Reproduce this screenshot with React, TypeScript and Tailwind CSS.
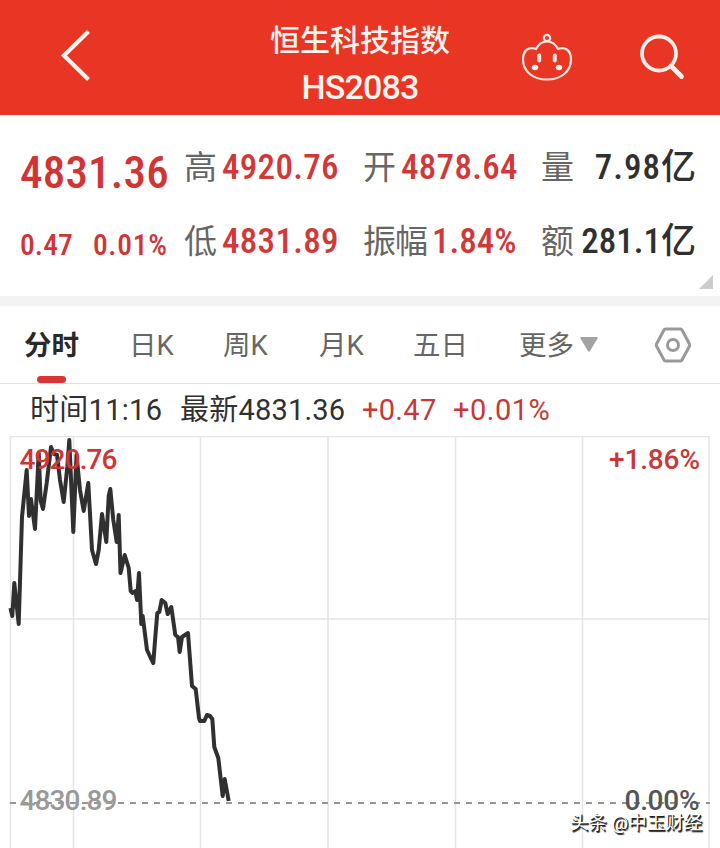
import clsx from "clsx";

type Stat = { label: string; value: string; red?: boolean };

const columns: { className: string; stats: Stat[] }[] = [
  {
    className: "w-[179px]",
    stats: [
      { label: "高", value: "4920.76", red: true },
      { label: "低", value: "4831.89", red: true },
    ],
  },
  {
    className: "w-[178px]",
    stats: [
      { label: "开", value: "4878.64", red: true },
      { label: "振幅", value: "1.84%", red: true },
    ],
  },
  {
    className: "w-[155px]",
    stats: [
      { label: "量", value: "7.98" },
      { label: "额", value: "281.1" },
    ],
  },
];

const tabs = [
  { label: "日K", className: "w-[94px]" },
  { label: "周K", className: "w-[96px]" },
  { label: "月K", className: "w-[94px]" },
  { label: "五日", className: "w-[106px]" },
];

const prices = [
  [10.5, 608], [12.3, 616], [14.3, 583], [18.7, 624], [22, 517], [26.7, 470], [29, 516], [31, 499],
  [35, 529], [38.7, 453], [40.7, 501], [43, 509], [46.7, 483], [51, 447], [54, 454], [57, 455],
  [60, 480], [63.7, 502], [67.3, 467], [69.3, 440], [73.3, 532], [76.5, 455], [80, 490], [83.7, 511],
  [88.3, 483], [92, 550], [96, 564], [98.7, 550], [102, 514], [106.3, 542], [108.7, 496], [110.3, 489],
  [113.3, 520], [116.7, 542], [118.7, 515], [120.5, 573], [124.7, 555], [128.7, 568], [130.7, 591],
  [132.7, 593], [135.3, 591], [137, 600], [139, 573], [141.3, 624], [142.7, 616], [147, 650],
  [150.3, 657], [153.3, 663], [155.3, 637], [157.3, 613], [159.3, 612], [161.7, 600], [165.3, 603],
  [167.7, 614], [171.3, 607], [175.3, 635], [178, 637], [179.7, 652], [182, 637], [188, 633],
  [192, 686], [195.7, 689], [199, 718], [200, 721], [204.3, 721], [207, 715], [210, 716], [212.3, 719],
  [214.3, 747], [218.3, 758], [222.7, 796], [224.7, 779], [228.7, 801],
];

function BackIcon() {
  return (
    <svg width="32" height="52" viewBox="0 0 32 52" fill="none" stroke="#fff3ee" strokeWidth="4.2">
      <path d="M28.5 2.5 4 26.5 28.5 50.5" />
    </svg>
  );
}

function RobotIcon() {
  return (
    <svg width="52" height="50" viewBox="0 0 52 50" fill="none" stroke="#ffe9e2" strokeWidth="2.2">
      <circle cx="26" cy="6" r="3.2" />
      <path d="M26 9.5c5 0 8.5 2.5 11 7.5 7-2.5 13 1 13 10.5C50 39.5 40 47.5 26 47.5S2 39.5 2 27.5C2 18 8 14.5 15 17 17.5 12 21 9.5 26 9.5Z" />
      <path d="M18.2 23.5v5M33.8 23.5v5" strokeWidth="4" strokeLinecap="round" />
      <g fill="#fff3ee" stroke="none">
        <ellipse cx="14" cy="35.5" rx="3.2" ry="2.7" />
        <ellipse cx="38" cy="35.5" rx="3.2" ry="2.7" />
      </g>
    </svg>
  );
}

function SearchIcon() {
  return (
    <svg width="46" height="46" viewBox="0 0 46 46" fill="none" stroke="#ffeee8">
      <circle cx="20" cy="19.5" r="17" strokeWidth="3.8" />
      <path d="M32 32 42.5 42.5" strokeWidth="4.8" strokeLinecap="round" />
    </svg>
  );
}

function SettingsIcon() {
  return (
    <svg width="38" height="36" viewBox="0 0 38 36" fill="none" stroke="#999" strokeWidth="3" strokeLinejoin="round">
      <path d="M11.5 2h15q1 0 1.5 1l7.5 14q.5 1 0 2l-7.5 14q-.5 1-1.5 1h-15q-1 0-1.5-1L2.5 19q-.5-1 0-2L10 3q.5-1 1.5-1Z" />
      <circle cx="19" cy="18" r="5.5" />
    </svg>
  );
}

function Header() {
  return (
    <header className="flex h-[115px] items-start bg-[#e93524] text-[#fff3ee]">
      <div className="w-[239px] pt-[29px] pl-[60px]">
        <BackIcon />
      </div>
      <div className="flex w-[242px] flex-col items-center pt-[21px] font-medium">
        <h1 className="text-[30px] leading-10">恒生科技指数</h1>
        <p className="pt-1.5 text-[34px] leading-10 tracking-[-0.8px]">HS2083</p>
      </div>
      <div className="w-[158px] pt-[32px] pl-10">
        <RobotIcon />
      </div>
      <div className="pt-[34px]">
        <SearchIcon />
      </div>
    </header>
  );
}

function Quote() {
  return (
    <section className="relative flex h-[181px] pl-5">
      <div className="w-[164px] font-medium whitespace-nowrap text-[#d23434] [font-stretch:85%]">
        <p className="pt-[33px] text-[45px] leading-[50px] tracking-[0.2px]">4831.36</p>
        <p className="flex gap-5 pt-[27px] text-[29.5px] leading-10 tracking-[0.1px]">
          <span>0.47</span>
          <span className="tracking-[0.7px]">0.01%</span>
        </p>
      </div>
      {columns.map((column) => (
        <div key={column.stats[0].label} className={clsx("pt-7", column.className)}>
          {column.stats.map(({ label, value, red }) => (
            <div key={label} className="flex h-[74px] items-start whitespace-nowrap">
              <span className={clsx("text-[33px] leading-[50px] text-[#666]", label.length > 1 && "tracking-[-1px]")}>{label}</span>
              <span
                className={clsx(
                  "text-[35px] leading-[50px] font-medium [font-stretch:85%]",
                  red ? "pl-[5px] text-[#d23838]" : "ml-auto text-[#303030]",
                  red && label.length === 1 && "tracking-[0.3px]",
                  label === "量" && "tracking-[1px]",
                )}
              >
                {value}
                {!red && <span className="tracking-normal">亿</span>}
              </span>
            </div>
          ))}
        </div>
      ))}
      <svg className="absolute right-[7px] bottom-[7px]" width="14" height="14">
        <path d="M14 0v14H0Z" fill="#ccc" />
      </svg>
    </section>
  );
}

function Tabs() {
  return (
    <nav className="flex h-[78px] border-b border-[#dedfdf] text-[27.5px] leading-[79px] text-[#666]">
      <div className="relative w-[129px] pl-6 font-bold text-[#292929]">
        分时
        <span className="absolute bottom-0 left-[37px] h-[7px] w-[29px] rounded-full bg-[#d93434]" />
      </div>
      {tabs.map(({ label, className }) => (
        <div key={label} className={className}>
          {label}
        </div>
      ))}
      <div className="flex w-[135px] gap-1.5">
        更多
        <svg className="mt-[31px]" width="18" height="15">
          <path d="M1 0h16q1 0 .5 1.5L10 14q-1 1-2 0L.5 1.5Q0 0 1 0Z" fill="#a3a3a3" />
        </svg>
      </div>
      <div className="flex items-center">
        <SettingsIcon />
      </div>
    </nav>
  );
}

function Chart() {
  return (
    <svg className="block" width="720" height="412" viewBox="0 436 720 412">
      <g stroke="#e5e5e5" strokeWidth="1.5">
        <path d="M10 436.5H710M10 619H710" />
        {[10.5, 73.5, 200.5, 328, 455.5, 582.5, 709].map((x) => (
          <path key={x} d={`M${x} 436V848`} />
        ))}
      </g>
      <path d="M10 803H710" stroke="#969696" strokeWidth="1.8" strokeDasharray="6 6" />
      <polyline points={prices.map((p) => p.join(",")).join(" ")} fill="none" stroke="#303030" strokeWidth="4" strokeLinejoin="round" />
      <g fontSize="28" fontWeight="500">
        <text x="19.5" y="469" textLength="98" fill="#d23434">4920.76</text>
        <text x="609" y="469" textLength="91" fill="#c93838">+1.86%</text>
        <text x="19.5" y="810" textLength="98" fill="#999">4830.89</text>
        <text x="624.5" y="810" textLength="75" fill="#555">0.00%</text>
      </g>
    </svg>
  );
}

export default function App() {
  return (
    <div className="relative h-[848px] w-[720px] overflow-hidden bg-white font-['Roboto','Noto_Sans_CJK_SC',sans-serif]">
      <Header />
      <Quote />
      <div className="h-2.5 bg-[#f3f3f3]" />
      <Tabs />
      <div className="flex h-[52px] pl-[30px] text-[29px] leading-[53px] whitespace-nowrap text-[#303030]">
        <span className="w-[150px] tracking-[0.3px]">时间11:16</span>
        <span className="w-[182px] tracking-[0.2px]">最新4831.36</span>
        <span className="w-[91px] tracking-[0.3px] text-[#c93838]">+0.47</span>
        <span className="tracking-[0.5px] text-[#c93838]">+0.01%</span>
      </div>
      <Chart />
      <p className="absolute top-[808px] left-[570px] text-[18.5px] leading-[30px] whitespace-nowrap text-white [text-shadow:1px_1px_0_#222,1.5px_1.5px_1px_#222]">
        头条 @中玉财经
      </p>
    </div>
  );
}
